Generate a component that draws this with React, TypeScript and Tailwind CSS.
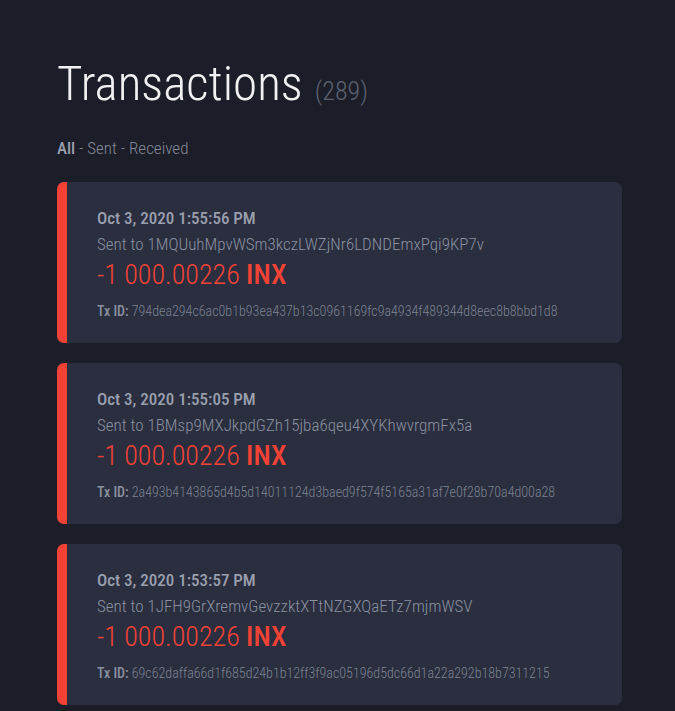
type Tx = { date: string; to: string; amount: string; id: string };

const txs: Tx[] = [
  {
    date: "Oct 3, 2020 1:55:56 PM",
    to: "1MQUuhMpvWSm3kczLWZjNr6LDNDEmxPqi9KP7v",
    amount: "-1 000.00226",
    id: "794dea294c6ac0b1b93ea437b13c0961169fc9a4934f489344d8eec8b8bbd1d8",
  },
  {
    date: "Oct 3, 2020 1:55:05 PM",
    to: "1BMsp9MXJkpdGZh15jba6qeu4XYKhwvrgmFx5a",
    amount: "-1 000.00226",
    id: "2a493b4143865d4b5d14011124d3baed9f574f5165a31af7e0f28b70a4d00a28",
  },
  {
    date: "Oct 3, 2020 1:53:57 PM",
    to: "1JFH9GrXremvGevzzktXTtNZGXQaETz7mjmWSV",
    amount: "-1 000.00226",
    id: "69c62daffa66d1f685d24b1b12ff3f9ac05196d5dc66d1a22a292b18b7311215",
  },
];

function TxCard({ tx }: { tx: Tx }) {
  return (
    <div className="flex h-[161px] overflow-hidden rounded-[7px] bg-[#2a2e3f]">
      <div className="w-[10px] shrink-0 bg-[#f24236]" />
      <div className="flex flex-col pl-[30px] pt-[28px] leading-none">
        <div className="text-[17px] font-medium text-[#9a9fae]">{tx.date}</div>
        <div className="mt-[9px] text-[17px] font-light text-[#8b90a0]">Sent to {tx.to}</div>
        <div className="mt-[8px] text-[28px] font-light text-[#f24236]">
          {tx.amount} <span className="font-medium">INX</span>
        </div>
        <div className="mt-[15px] text-[14px] font-light text-[#7d8292]">
          <span className="font-medium text-[#8b90a0]">Tx ID:</span> {tx.id}
        </div>
      </div>
    </div>
  );
}

export default function App() {
  return (
    <div className="min-h-[711px] bg-[#1b1d28] pl-[57px] pr-[53px] pt-[59px] font-['Roboto_Condensed',Roboto,sans-serif]">
      <h1 className="flex items-baseline leading-none">
        <span className="text-[49px] font-light text-[#f1f1f3]">Transactions</span>
        <span className="ml-[12px] text-[26px] font-light text-[#5c6172]">(289)</span>
      </h1>
      <div className="mt-[32px] text-[17px] leading-none font-light text-[#858a9a]">
        <span className="font-medium text-[#9a9fae]">All</span> - Sent - Received
      </div>
      <div className="mt-[25px] flex flex-col gap-[20px]">
        {txs.map((tx) => (
          <TxCard key={tx.id} tx={tx} />
        ))}
      </div>
    </div>
  );
}
